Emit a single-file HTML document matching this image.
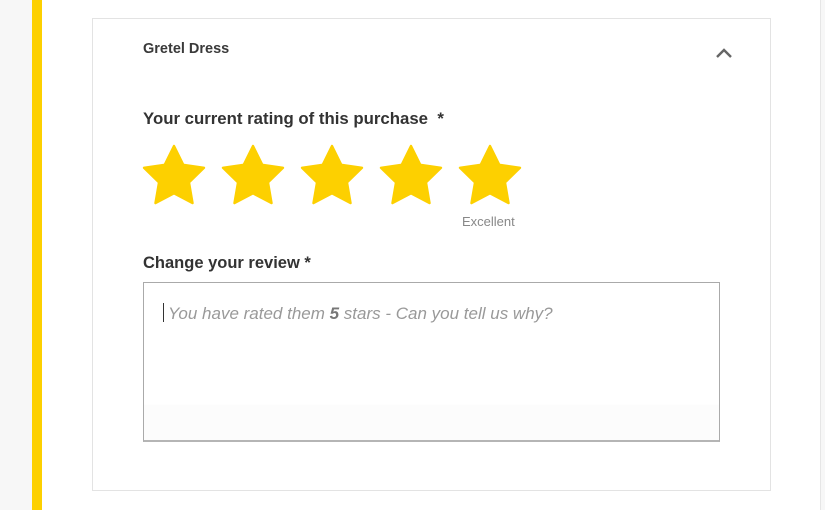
<!DOCTYPE html>
<html><head><style>
*{margin:0;padding:0;box-sizing:border-box}
body{width:825px;height:510px;background:#fff;position:relative;overflow:hidden;font-family:"Liberation Sans",Arial,sans-serif;color:#333}
.lg{position:absolute;left:0;top:0;width:32px;height:510px;background:#f7f7f7}
.yb{position:absolute;left:32px;top:0;width:10px;height:510px;background:#fdd000}
.rl{position:absolute;left:820px;top:0;width:5px;height:510px;background:#f7f7f7;border-left:1px solid #e6e6e6}
.card{position:absolute;left:92px;top:18px;width:679px;height:473px;border:1px solid #e3e3e3}
.t{position:absolute;font-weight:bold}
.ta{position:absolute;left:143px;top:282px;width:577px;height:160px;border:1px solid #aaa;border-bottom:2px solid #b5b5b5;background:linear-gradient(#fff 0,#fff 121px,#fcfcfc 122px)}
</style></head><body>
<div class="lg"></div><div class="yb"></div><div class="rl"></div>
<div class="card"></div>
<div class="t" style="left:143px;top:41px;font-size:14.5px;color:#3a3a3a">Gretel Dress</div>
<svg style="position:absolute;left:714px;top:47px" width="20" height="14"><path d="M3 10 L10 3 L17 10" fill="none" stroke="#666" stroke-width="2.4"/></svg>
<div class="t" style="left:143px;top:109px;font-size:16.8px">Your current rating of this purchase &nbsp;*</div>
<svg width="825" height="70" style="position:absolute;left:0;top:140px">
<defs><polygon id="s" points="12,2 15.09,8.26 22,9.27 17,14.14 18.18,21.02 12,17.77 5.82,21.02 7,14.14 2,9.27 8.91,8.26" fill="#fdd000" stroke="#fdd000" stroke-width="0.8" stroke-linejoin="round"/></defs>
<g transform="translate(138,0) scale(3)"><use href="#s"/></g>
<g transform="translate(217,0) scale(3)"><use href="#s"/></g>
<g transform="translate(296,0) scale(3)"><use href="#s"/></g>
<g transform="translate(375,0) scale(3)"><use href="#s"/></g>
<g transform="translate(454,0) scale(3)"><use href="#s"/></g>
</svg>
<div style="position:absolute;left:462px;top:214px;font-size:13px;color:#888">Excellent</div>
<div class="t" style="left:143px;top:254px;font-size:16.5px">Change your review *</div>
<div class="ta"></div>
<div style="position:absolute;left:163px;top:303px;width:1px;height:19px;background:#333"></div>
<div style="position:absolute;left:168px;top:304px;font-size:17px;font-style:italic;color:#999">You have rated them <b style="color:#777">5</b> stars - Can you tell us why?</div>
</body></html>
